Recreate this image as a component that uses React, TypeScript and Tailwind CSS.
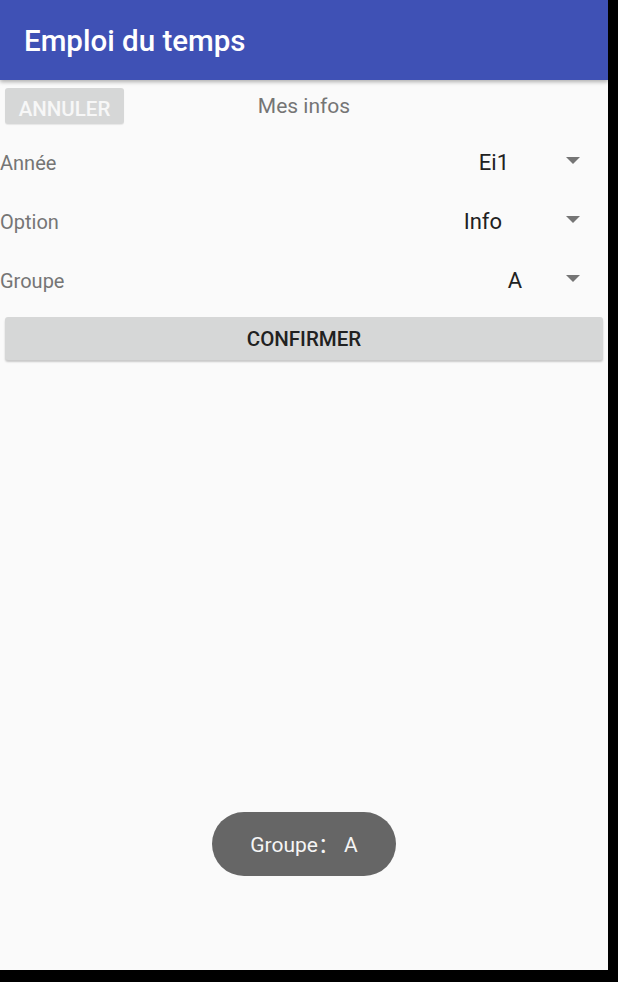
import React from "react";

const Caret = () => (
  <svg width="14" height="7" viewBox="0 0 14 7" className="block">
    <polygon points="0,0 14,0 7,7" fill="#757575" />
  </svg>
);

function Row({ label, value, mr }: { label: string; value: string; mr: string }) {
  return (
    <div className="h-[59px] flex items-center pt-[2px]">
      <span className="text-[20px] text-[#757575] leading-none">{label}</span>
      <span className={`ml-auto text-[22px] text-[#212121] leading-none ${mr}`}>{value}</span>
      <span className="mr-[28px] mt-[-4px]">
        <Caret />
      </span>
    </div>
  );
}

export default function App() {
  return (
    <div
      className="w-[618px] h-[982px] bg-black"
      style={{ fontFamily: 'Roboto, "Noto Sans CJK SC", sans-serif' }}
    >
      <div className="relative w-[608px] h-[970px] bg-[#fafafa] overflow-hidden flex flex-col">
        <div className="h-[80px] shrink-0 bg-[#3f51b5] flex items-center pl-[24px] pt-[3px] shadow-[0_2px_4px_rgba(0,0,0,0.3)] z-10">
          <span className="text-white text-[29.5px] font-medium leading-none">Emploi du temps</span>
        </div>
        <div className="grid grid-cols-[1fr_auto_1fr] items-center h-[52px] shrink-0">
          <div className="pl-[5px]">
            <div className="w-[119px] h-[36px] rounded-[3px] bg-[#d6d7d7] flex items-center justify-center pt-[6px] shadow-[0_1px_1px_rgba(0,0,0,0.08)]">
              <span className="text-[#f7f7f7] text-[20.5px] font-medium leading-none">ANNULER</span>
            </div>
          </div>
          <span className="text-[21px] text-[#757575] leading-none">Mes infos</span>
          <div />
        </div>
        <Row label="Année" value="Ei1" mr="mr-[57px]" />
        <Row label="Option" value="Info" mr="mr-[64px]" />
        <Row label="Groupe" value="A" mr="mr-[44px]" />
        <div className="mx-[5px] mt-[8px] h-[43px] rounded-[3px] bg-[#d6d7d7] flex items-center justify-center pt-[1px] shadow-[0_2px_2px_rgba(0,0,0,0.2)]">
          <span className="text-[#212121] text-[20.5px] font-medium leading-none">CONFIRMER</span>
        </div>
        <div className="absolute left-[212px] top-[812px] w-[184px] h-[64px] rounded-full bg-[#666666] flex items-center justify-center">
          <span className="text-[#f5f5f5] text-[21px] leading-none pt-[2px]">Groupe： A</span>
        </div>
      </div>
    </div>
  );
}
